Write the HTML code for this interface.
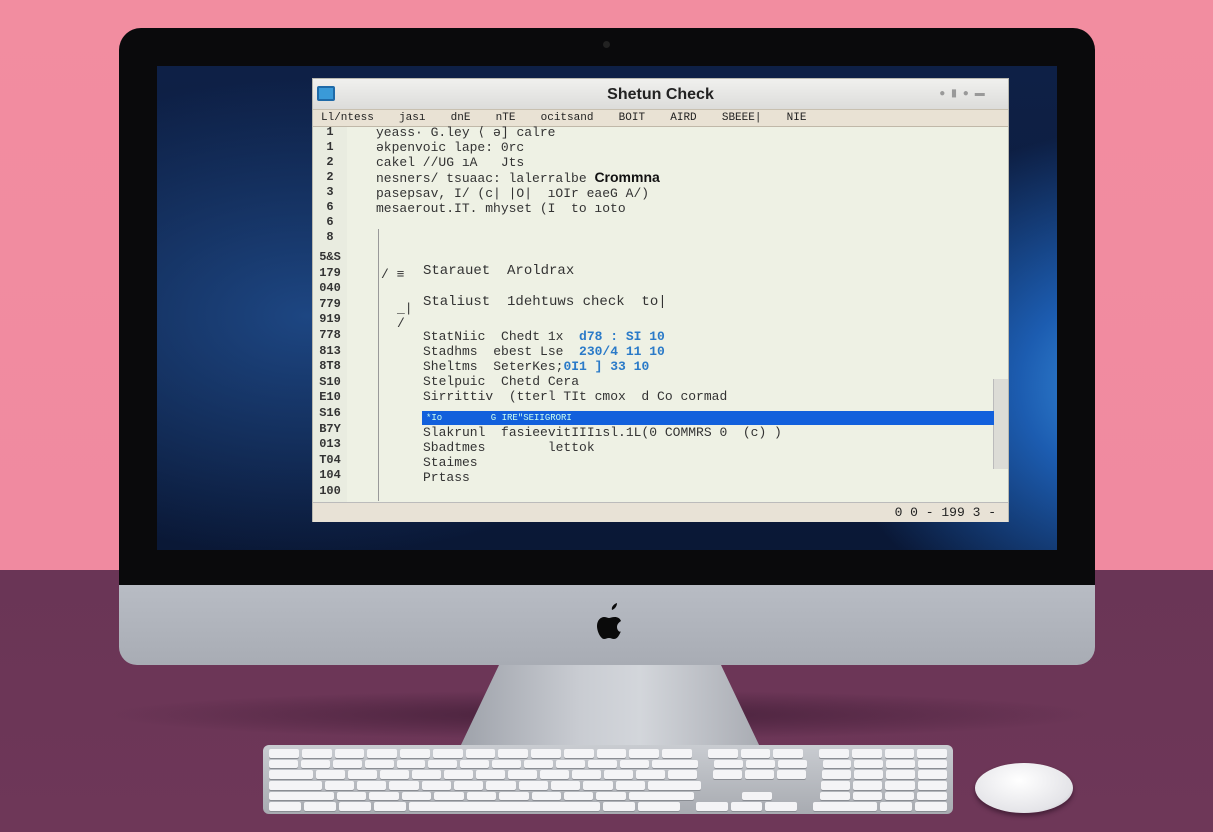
<!DOCTYPE html>
<html><head><meta charset="utf-8"><style>
*{margin:0;padding:0;box-sizing:border-box}
body{width:1213px;height:832px;overflow:hidden;position:relative;font-family:"Liberation Sans",sans-serif;
background:linear-gradient(#f28da0 0,#f08aa0 570px,#6a3556 570px,#6e3758 832px)}
.abs{position:absolute}
#shadow{left:100px;top:690px;width:1000px;height:50px;background:radial-gradient(ellipse at center,rgba(40,15,35,.55),rgba(40,15,35,0) 70%)}
#bezel{left:119px;top:28px;width:976px;height:570px;background:#0a0a0c;border-radius:22px 22px 0 0}
#screen{left:157px;top:66px;width:900px;height:484px;overflow:hidden;
background:radial-gradient(ellipse 320px 260px at 990px 320px,#3f9be8 0,#1c5cb0 40%,rgba(10,30,80,0) 100%),radial-gradient(ellipse 500px 300px at 150px 250px,#1d4682,rgba(0,0,0,0) 80%),linear-gradient(#0e2046,#0a1836)}
#chin{left:119px;top:585px;width:976px;height:80px;background:linear-gradient(#b8bcc4,#a8acb4);border-radius:0 0 18px 18px}
#stand{left:460px;top:665px;width:300px;height:82px;background:linear-gradient(90deg,#9ea2aa,#c9ccd2 40%,#d3d6db 60%,#a9acb3);clip-path:polygon(13% 0,87% 0,100% 100%,0 100%)}
#kb{left:263px;top:745px;width:690px;height:69px;background:linear-gradient(#c9ccd1,#a8abb1);border-radius:6px;padding:4px 6px;overflow:hidden}
.row{display:flex;gap:3px;height:8.5px;margin-bottom:2.2px}
.k{background:#f4f4f6;border-radius:2px;flex:1;box-shadow:0 1px 0 #8a8d93}
#mouse{left:975px;top:763px;width:98px;height:50px;border-radius:50%;background:radial-gradient(ellipse at 45% 35%,#fff,#e4e4e8 70%,#a9a9b0);box-shadow:0 3px 4px rgba(30,10,25,.5)}
#win{left:312px;top:78px;width:697px;height:444px;background:#eef1e4;border:1px solid #b8b8b0;font-size:13px;color:#333}
#title{height:30px;background:linear-gradient(#f0f0ee,#dcdcda);text-align:center;font:bold 16px/32px "Liberation Sans",sans-serif;color:#222;position:relative}
#menu{height:18px;background:#e9e2d4;border-top:1px solid #c8c0b0;border-bottom:1px solid #c0b8a8;font:11px/17px "Liberation Mono",monospace;color:#222;padding-left:8px;word-spacing:6px;white-space:pre}
.t{position:absolute;font:13px/15px "Liberation Mono",monospace;color:#333;white-space:pre}
.g{position:absolute;font:bold 12px/15px "Liberation Mono",monospace;color:#333;width:34px;text-align:center}
.b{color:#2a7ac8;font-weight:bold}
</style></head><body>
<div class="abs" id="shadow"></div>
<div class="abs" id="bezel"></div>
<div class="abs" style="left:603px;top:41px;width:7px;height:7px;border-radius:50%;background:#222"></div>
<div class="abs" id="screen"></div>
<div class="abs" id="chin"></div>
<svg class="abs" style="left:592px;top:601px" width="36" height="42" viewBox="0 0 36 42"><path d="M25 2c0 3-2 6-5 7-1-3 2-6 5-7zM29 30c-2 5-4 8-7 8-2 0-3-1-5-1s-3 1-5 1c-3 0-7-7-7-13 0-6 4-9 7-9 2 0 4 1 5 1s3-1 6-1c2 0 5 1 6 4-3 2-4 4-4 6 0 3 2 5 4 5z" fill="#0a0a0a"/></svg>
<div class="abs" id="stand"></div>
<div class="abs" id="kb">
<div class="row"><div class="k"></div><div class="k"></div><div class="k"></div><div class="k"></div><div class="k"></div><div class="k"></div><div class="k"></div><div class="k"></div><div class="k"></div><div class="k"></div><div class="k"></div><div class="k"></div><div class="k"></div><div style="width:10px"></div><div class="k"></div><div class="k"></div><div class="k"></div><div style="width:10px"></div><div class="k"></div><div class="k"></div><div class="k"></div><div class="k"></div></div>
<div class="row"><div class="k"></div><div class="k"></div><div class="k"></div><div class="k"></div><div class="k"></div><div class="k"></div><div class="k"></div><div class="k"></div><div class="k"></div><div class="k"></div><div class="k"></div><div class="k"></div><div class="k" style="flex:1.6"></div><div style="width:10px"></div><div class="k"></div><div class="k"></div><div class="k"></div><div style="width:10px"></div><div class="k"></div><div class="k"></div><div class="k"></div><div class="k"></div></div>
<div class="row"><div class="k" style="flex:1.5"></div><div class="k"></div><div class="k"></div><div class="k"></div><div class="k"></div><div class="k"></div><div class="k"></div><div class="k"></div><div class="k"></div><div class="k"></div><div class="k"></div><div class="k"></div><div class="k"></div><div style="width:10px"></div><div class="k"></div><div class="k"></div><div class="k"></div><div style="width:10px"></div><div class="k"></div><div class="k"></div><div class="k"></div><div class="k"></div></div>
<div class="row"><div class="k" style="flex:1.8"></div><div class="k"></div><div class="k"></div><div class="k"></div><div class="k"></div><div class="k"></div><div class="k"></div><div class="k"></div><div class="k"></div><div class="k"></div><div class="k"></div><div class="k" style="flex:1.8"></div><div style="width:10px"></div><div style="flex:3"></div><div style="width:10px"></div><div class="k"></div><div class="k"></div><div class="k"></div><div class="k"></div></div>
<div class="row"><div class="k" style="flex:2.2"></div><div class="k"></div><div class="k"></div><div class="k"></div><div class="k"></div><div class="k"></div><div class="k"></div><div class="k"></div><div class="k"></div><div class="k"></div><div class="k" style="flex:2.2"></div><div style="width:10px"></div><div style="flex:1"></div><div class="k"></div><div style="flex:1"></div><div style="width:10px"></div><div class="k"></div><div class="k"></div><div class="k"></div><div class="k"></div></div>
<div class="row"><div class="k"></div><div class="k"></div><div class="k"></div><div class="k"></div><div class="k" style="flex:6"></div><div class="k"></div><div class="k" style="flex:1.3"></div><div style="width:10px"></div><div class="k"></div><div class="k"></div><div class="k"></div><div style="width:10px"></div><div class="k" style="flex:2"></div><div class="k"></div><div class="k"></div></div>
</div>
<div class="abs" id="mouse"></div>
<div class="abs" id="win">
<div id="title">Shetun Check
<div style="position:absolute;left:4px;top:7px;width:18px;height:15px;background:#3a9ad8;border:2px solid #1f6aa8;border-radius:2px"></div>
<div style="position:absolute;right:8px;top:10px;width:70px;height:10px;font-size:10px;line-height:10px;color:#999;letter-spacing:6px">●▮●▬</div></div>
<div id="menu">Ll/ntess  jası  dnE  nTE  ocitsand  BOIT  AIRD  SBEEE|  NIE</div>
<div style="position:absolute;left:0;top:48px;width:34px;height:375px;background:#e9ece0"></div>
<div style="position:absolute;left:65px;top:150px;width:1px;height:272px;background:#999"></div>
<div style="position:absolute;left:680px;top:300px;width:15px;height:90px;background:#dcdcd6;border-left:1px solid #bbb"></div>
<div style="position:absolute;left:0;top:423px;width:695px;height:20px;background:#e8e2d6;border-top:1px solid #bbb;font:13px/20px 'Liberation Mono',monospace;text-align:right;padding-right:12px;color:#222">0 0 - 199 3 -</div>
<div style="position:absolute;left:109px;top:332px;width:572px;height:14px;background:#1260dc;font:9px/14px 'Liberation Mono',monospace;color:#cfe;padding-left:4px;white-space:pre">*Io         G IRE"SEIIGRORI</div>
<div class="t" style="left:63px;top:46px">yeass· G.ley ⟨ ə] calre
ǝkpenvoic lape: 0rc
cakel //UG ıA   Jts
nesners/ tsuaac: lalerralbe <b style="font-family:'Liberation Sans';font-size:14px;color:#111">Crommna</b>
pasepsav, I/ (c| |O|  ıOIr eaeG A/)
mesaerout.IT. mhyset (I  to ıoto</div>
<div class="t" style="left:110px;top:185px;font-size:14px">Starauet  Aroldrax</div>
<div class="t" style="left:110px;top:216px;font-size:14px">Staliust  1dehtuws check  to|</div>
<div class="t" style="left:110px;top:250px">StatNiic  Chedt 1x  <span class="b">d78 : SI 10</span>
Stadhms  ebest Lse  <span class="b">230/4 11 10</span>
Sheltms  SeterKes;<span class="b">0I1 ] 33 10</span>
Stelpuic  Chetd Cera
Sirrittiv  (tterl TIt cmox  d Co cormad</div>
<div class="t" style="left:110px;top:346px">Slakrunl  fasieevitIIIısl.1L(0 COMMRS 0  (c) )
Sbadtmes        lettok
Staimes
Prtass</div>
<div class="g" style="left:0;top:46px">1<br>1<br>2<br>2<br>3<br>6<br>6<br>8</div>
<div class="g" style="left:0;top:171px;line-height:15.6px">5&amp;S<br>179<br>040<br>779<br>919<br>778<br>813<br>8T8<br>S10<br>E10<br>S16<br>B7Y<br>013<br>T04<br>104<br>100</div>
<div class="t" style="left:68px;top:188px">/ ≡</div>
<div class="t" style="left:84px;top:222px">_|<br>/</div>
</div>
</body></html>
